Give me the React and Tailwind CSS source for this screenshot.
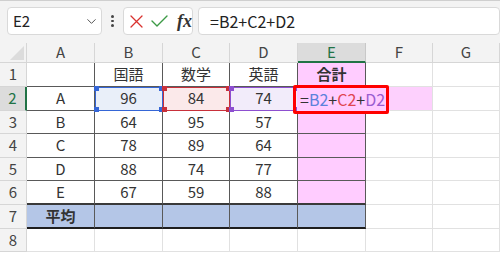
import { ChevronDown } from 'lucide-react';

const COLS = ['A', 'B', 'C', 'D', 'E', 'F', 'G'];
const COL_W = ['w-[68px]', 'w-[68px]', 'w-[67px]', 'w-[68px]', 'w-[68px]', 'w-[67px]', 'w-[67px]'];
const ROW_H = ['h-[24px]', 'h-[24px]', 'h-[23px]', 'h-[24px]', 'h-[23px]', 'h-[24px]', 'h-[24px]', 'h-[23px]'];

const data = [
  ['', '国語', '数学', '英語', '合計', '', ''],
  ['A', '96', '84', '74', '', '', ''],
  ['B', '64', '95', '57', '', '', ''],
  ['C', '78', '89', '64', '', '', ''],
  ['D', '88', '74', '77', '', '', ''],
  ['E', '67', '59', '88', '', '', ''],
  ['平均', '', '', '', '', '', ''],
  ['', '', '', '', '', '', ''],
];

// background for a body cell (r is 1-based row number, c is column index)
function cellBg(r, c) {
  if (r === 7 && c <= 4) return 'bg-[#b4c6e7]';
  if (r === 2 && c === 1) return 'bg-[#e9eff9]';
  if (r === 2 && c === 2) return 'bg-[#fbe9ea]';
  if (r === 2 && c === 3) return 'bg-[#f2ecfa]';
  if (c === 4 && r <= 6) return 'bg-[#ffccff]';
  if (r === 2 && c === 5) return 'bg-[#fdd0fd]';
  return 'bg-white';
}

function cellBorder(r, c) {
  const inTable = r <= 7 && c <= 4;
  const right = inTable ? 'border-r border-r-[#595959]' : 'border-r border-r-[#e1e1e1]';
  let bottom = 'border-b border-b-[#e1e1e1]';
  if (inTable) bottom = 'border-b border-b-[#595959]';
  if (inTable && r === 6) bottom = 'border-b-2 border-b-[#3a3a3a]';
  if (inTable && r === 7) bottom = 'border-b-2 border-b-[#1e1e1e]';
  return `${right} ${bottom}`;
}

function Toolbar() {
  return (
    <div className="h-[43px] bg-[#f3f3f3] border-t border-[#cfcfcf] flex items-start pt-[6px] pl-[7px] gap-0">
      {/* name box */}
      <div className="w-[97px] h-[28px] bg-white border border-[#d9d9d9] rounded-[4px] flex items-center justify-between pl-[5px] pr-[2px]">
        <span className="text-[15px] text-[#222]">E2</span>
        <ChevronDown size={15} strokeWidth={1.6} className="text-[#555]" />
      </div>
      {/* vertical dots */}
      <div className="w-[22px] h-[28px] flex flex-col items-center justify-center gap-[2px]">
        <span className="w-[2.5px] h-[2.5px] bg-[#444] rounded-full" />
        <span className="w-[2.5px] h-[2.5px] bg-[#444] rounded-full" />
        <span className="w-[2.5px] h-[2.5px] bg-[#444] rounded-full" />
      </div>
      {/* cancel / enter / fx */}
      <div className="w-[71px] h-[28px] bg-white border border-[#d9d9d9] rounded-[4px] flex items-center pl-[6px] gap-[8px]">
        <svg width="13" height="13" viewBox="0 0 13 13" fill="none">
          <path d="M1 1 L12 12 M12 1 L1 12" stroke="#d9322f" strokeWidth="1.3" strokeLinecap="round" />
        </svg>
        <svg width="17" height="12" viewBox="0 0 17 12" fill="none">
          <path d="M1 6 L6 11 L16 1" stroke="#3c9a46" strokeWidth="1.4" strokeLinecap="round" strokeLinejoin="round" />
        </svg>
        <span className="italic font-bold text-[18px] leading-none text-[#333] pl-[1px] font-['Liberation_Serif',serif]">fx</span>
      </div>
      {/* formula box */}
      <div className="ml-[5px] w-[310px] h-[28px] bg-white border border-[#d9d9d9] rounded-[4px] flex items-center pl-[11px]">
        <span className="text-[16px] text-[#222]">=B2+C2+D2</span>
      </div>
    </div>
  );
}

function HeaderRow() {
  return (
    <div className="flex h-[20px] bg-[#f3f3f3]">
      <div className="w-[27px] h-full border-r border-b border-[#d6d6d6] relative">
        <div className="absolute right-[2px] bottom-[2px] w-0 h-0 border-l-[14px] border-l-transparent border-b-[14px] border-b-[#dcdcdc]" />
      </div>
      {COLS.map((c, i) =>
        i === 4 ? (
          <div key={c} className={`${COL_W[i]} h-full bg-[#dcdcdc] border-r border-r-[#c8c8c8] border-b-2 border-b-[#217346] flex items-center justify-center text-[15px] text-[#217346]`}>
            {c}
          </div>
        ) : (
          <div key={c} className={`${COL_W[i]} h-full border-r border-b border-[#d6d6d6] flex items-center justify-center text-[15px] text-[#444]`}>
            {c}
          </div>
        )
      )}
    </div>
  );
}

function BodyRow({ r, cells }) {
  const h = ROW_H[r - 1];
  const selected = r === 2;
  return (
    <div className={`flex ${h}`}>
      <div
        className={
          selected
            ? 'w-[27px] h-full bg-[#dcdcdc] border-r-2 border-r-[#217346] border-b border-b-[#d6d6d6] flex items-center justify-center text-[15px] text-[#217346]'
            : 'w-[27px] h-full bg-[#f3f3f3] border-r border-b border-[#d6d6d6] flex items-center justify-center text-[15px] text-[#444]'
        }
      >
        {r}
      </div>
      {cells.map((v, c) => (
        <div
          key={c}
          className={`${COL_W[c]} h-full ${cellBg(r, c)} ${cellBorder(r, c)} flex items-center justify-center text-[15px] text-[#333] ${
            r === 1 && c === 4 ? 'font-bold text-[#111]' : ''
          } ${r === 7 && c === 0 ? 'font-bold text-[#111]' : ''}`}
        >
          {v}
        </div>
      ))}
    </div>
  );
}

function RangeBox({ className, color }) {
  return (
    <div className={`absolute ${className}`}>
      <span className={`absolute -left-[2px] -top-[2px] w-[5px] h-[5px] ${color}`} />
      <span className={`absolute -right-[2px] -top-[2px] w-[5px] h-[5px] ${color}`} />
      <span className={`absolute -left-[2px] -bottom-[2px] w-[5px] h-[5px] ${color}`} />
      <span className={`absolute -right-[2px] -bottom-[2px] w-[5px] h-[5px] ${color}`} />
    </div>
  );
}

export default function App() {
  return (
    <div className="w-[500px] h-[253px] overflow-hidden bg-white font-['Noto_Sans_CJK_JP',sans-serif]">
      <Toolbar />
      <div className="relative">
        <HeaderRow />
        {data.map((cells, i) => (
          <BodyRow key={i} r={i + 1} cells={cells} />
        ))}

        {/* formula reference ranges */}
        <RangeBox className="left-[95px] top-[44px] w-[68px] h-[24px] border-[1.5px] border-[#3566d6]" color="bg-[#3566d6]" />
        <RangeBox className="left-[163px] top-[44px] w-[67px] h-[24px] border-[1.5px] border-[#c8303a]" color="bg-[#c8303a]" />
        <RangeBox className="left-[230px] top-[44px] w-[68px] h-[24px] border-[1.5px] border-[#8d4fd0]" color="bg-[#8d4fd0]" />

        {/* active cell E2 in edit mode */}
        <div className="absolute left-[297px] top-[43px] w-[70px] h-[25px] border-l-2 border-b-2 border-[#217346]" />
        <div className="absolute left-[297px] top-[44px] h-[24px] flex items-center pl-[3px] text-[16px] leading-none bg-[#ffccff] pr-[2px]">
          <span className="text-[#333]">=</span>
          <span className="text-[#5b82db]">B2</span>
          <span className="text-[#333]">+</span>
          <span className="text-[#e04550]">C2</span>
          <span className="text-[#333]">+</span>
          <span className="text-[#9a5dd0]">D2</span>
          <span className="ml-[2px] w-px h-[18px] bg-[#222]" />
        </div>

        {/* red callout */}
        <div className="absolute left-[293px] top-[42px] w-[96px] h-[29px] border-[3px] border-[#ff0000] rounded-[2px]" />
      </div>
    </div>
  );
}
